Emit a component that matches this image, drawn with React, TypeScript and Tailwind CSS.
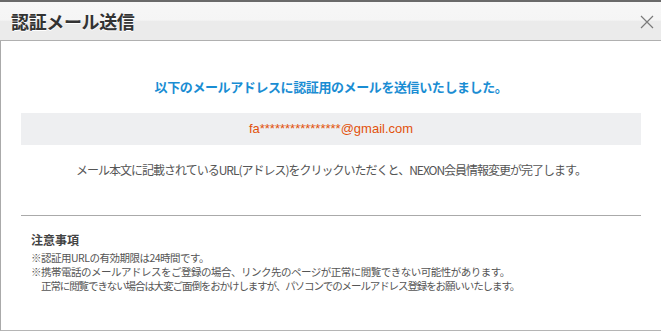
import React from "react";

export default function App() {
  const jp = { fontFamily: '"Noto Sans CJK JP", "Liberation Sans", sans-serif' };
  return (
    <div className="w-[661px] h-[333px] bg-white overflow-hidden" style={jp}>
      <div className="h-[2px] bg-[#6a6a6a]" />
      <div className="relative h-[39px] border-b border-[#b0b0b0] bg-[linear-gradient(to_bottom,#f7f7f7_0%,#f5f5f5_48%,#ebebeb_50%,#ebebeb_100%)] flex items-center pl-[11px]">
        <h1 className="text-[18px] font-bold text-[#333] leading-none tracking-[-0.02em] [text-shadow:0_1px_0_#fff]">
          認証メール送信
        </h1>
        <svg className="absolute right-[7px] top-[13px]" width="14" height="14" viewBox="0 0 14 14">
          <path d="M1 1 L13 13 M13 1 L1 13" stroke="#7a7a7a" strokeWidth="1.2" fill="none" />
        </svg>
      </div>
      <div className="h-[290px] border-l border-[#aaa] border-b border-b-[#b5b5b5] flex flex-col">
        <p className="mt-[37px] text-center text-[13px] font-bold text-[#1a8dd3] leading-[18px] tracking-[-0.4px]">
          以下のメールアドレスに認証用のメールを送信いたしました。
        </p>
        <div className="mt-[17px] mx-[20px] h-[32px] bg-[#eeeff1] flex items-center justify-center">
          <span className="text-[13px] text-[#e2520c]" style={{ fontFamily: '"Liberation Sans", sans-serif' }}>
            fa****************@gmail.com
          </span>
        </div>
        <p className="mt-[17px] text-center text-[12px] text-[#555] leading-[16px] tracking-[-1px]">
          メール本文に記載されているURL(アドレス)をクリックいただくと、NEXON会員情報変更が完了します。
        </p>
        <div className="mt-[37px] mx-[20px] border-t border-[#aaa]" />
        <div className="pl-[30px] pt-[16px]">
          <h2 className="text-[12px] font-bold text-[#444] leading-[16px]">注意事項</h2>
          <div className="mt-[3px] text-[10.5px] text-[#555] leading-[14px]">
            <p className="tracking-[-0.5px]">※認証用URLの有効期限は24時間です。</p>
            <p className="tracking-[-0.5px]">※携帯電話のメールアドレスをご登録の場合、リンク先のページが正常に閲覧できない可能性があります。</p>
            <p className="pl-[10px] tracking-[-1.1px]">正常に閲覧できない場合は大変ご面倒をおかけしますが、パソコンでのメールアドレス登録をお願いいたします。</p>
          </div>
        </div>
      </div>
    </div>
  );
}
